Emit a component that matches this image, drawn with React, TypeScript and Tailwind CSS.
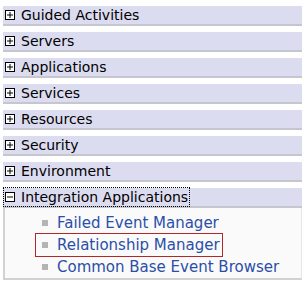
const sections = [
  "Guided Activities",
  "Servers",
  "Applications",
  "Services",
  "Resources",
  "Security",
  "Environment",
]

const links = ["Failed Event Manager", "Relationship Manager", "Common Base Event Browser"]

const Box = ({ open }: { open?: boolean }) => (
  <svg width="10" height="10" viewBox="0 0 10 10" className="shrink-0">
    <rect x="0.5" y="0.5" width="9" height="9" fill="white" stroke="black" />
    <path d="M2 5h6" stroke="black" />
    {!open && <path d="M5 2v6" stroke="black" />}
  </svg>
)

const App = () => {
  return (
    <div className="w-[305px] h-[282px] bg-white pt-[6px] pl-[3px] pr-[3px] font-['DejaVu_Sans',sans-serif] text-[14px] leading-none text-black">
      {sections.map((s) => (
        <div key={s} className="h-[20px] mb-[6px] bg-[#dcdcf0] border-b-2 border-[#c6c6ce] flex items-center pl-[2px] gap-[6px]">
          <Box />
          <span>{s}</span>
        </div>
      ))}
      <div className="h-[20px] bg-[#dcdcf0] border-b-2 border-[#c6c6ce] flex items-center pl-[1px]">
        <div className="flex items-center gap-[6px] h-[18px] pl-[1px] pr-[1px] outline-1 outline-dotted outline-black">
          <Box open />
          <span>Integration Applications</span>
        </div>
      </div>
      <div className="bg-[#fafafa] border-l-2 border-b-2 border-r border-[#d2d2d2] border-r-[#e6e6e6] pt-[4px] text-[15px] text-[#2b4ea8]">
        {links.map((l, i) => (
          <div key={l} className="h-[22px] flex items-center pl-[30px]">
            <div className={`h-[24px] flex items-center pl-[6px] pr-[2px] border ${i === 1 ? "border-[#b02828]" : "border-transparent"}`}>
              <span className="w-[6px] h-[6px] bg-[#b4b4b4] mr-[9px]" />
              <span>{l}</span>
            </div>
          </div>
        ))}
      </div>
    </div>
  )
}

export default App
